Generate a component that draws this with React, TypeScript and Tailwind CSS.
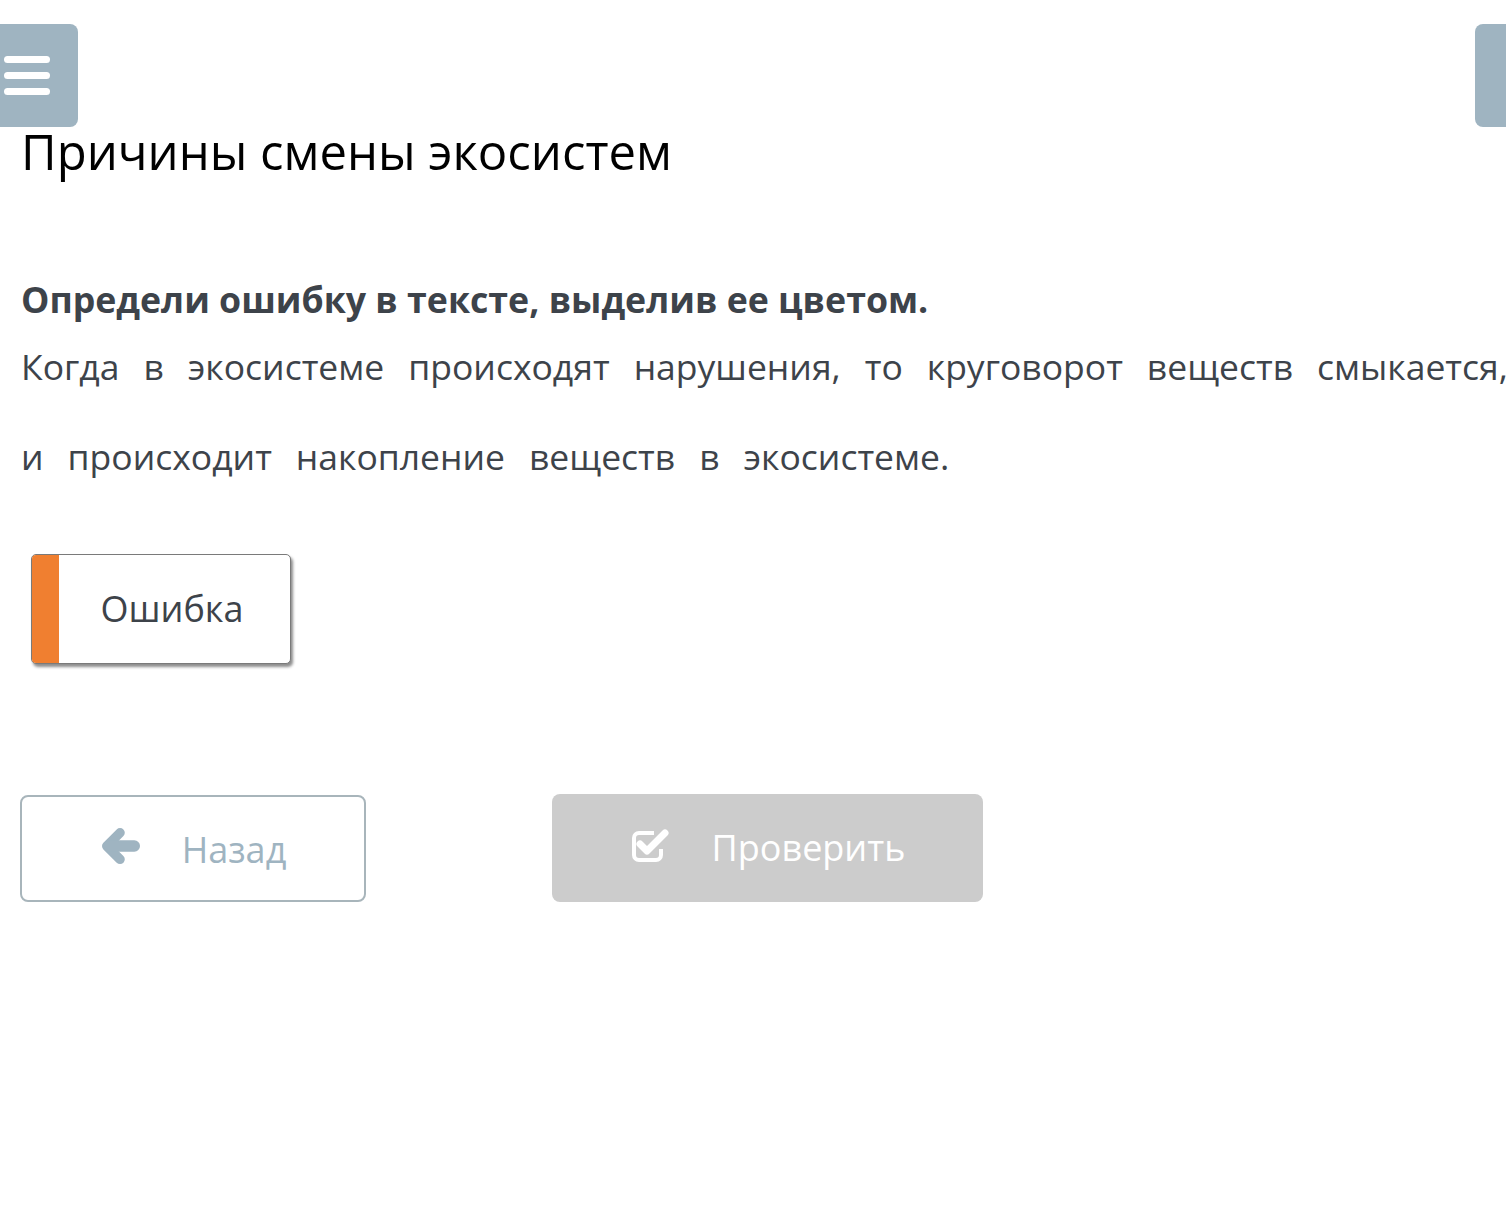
import React from "react";

const line1 = ["Когда", "в", "экосистеме", "происходят", "нарушения,", "то", "круговорот", "веществ", "смыкается,"];
const line2 = ["и", "происходит", "накопление", "веществ", "в", "экосистеме."];

export default function App() {
  return (
    <div className="relative w-[1506px] h-[1215px] overflow-hidden bg-white" style={{ fontFamily: '"Open Sans", sans-serif' }}>
      <div className="absolute left-0 top-[24px] w-[78px] h-[103px] bg-[#9fb4c1] rounded-r-[8px] flex flex-col justify-center gap-[9px] pl-[4px]">
        <div className="w-[46px] h-[7px] rounded-full bg-white" />
        <div className="w-[46px] h-[7px] rounded-full bg-white" />
        <div className="w-[46px] h-[7px] rounded-full bg-white" />
      </div>
      <div className="absolute left-[1475px] top-[24px] w-[60px] h-[103px] bg-[#9fb4c1] rounded-l-[8px]" />

      <div className="pl-[21px] pt-[121px]">
        <h1 className="text-[49px] leading-[60px] text-black font-normal">Причины смены экосистем</h1>
        <p className="mt-[94px] text-[35.7px] leading-[48px] font-bold text-[#3d434a]">Определи ошибку в тексте, выделив ее цветом.</p>
        <div className="mt-[14px] w-[1600px] text-[35.5px] text-[#3d434a]">
          <div className="flex gap-[24px] h-[60px] items-center whitespace-nowrap">
            {line1.map((w, i) => (
              <span key={i}>{w}</span>
            ))}
          </div>
          <div className="flex gap-[24px] h-[120px] items-center whitespace-nowrap">
            {line2.map((w, i) => (
              <span key={i}>{w}</span>
            ))}
          </div>
        </div>

        <div className="mt-[37px] ml-[10px] w-[260px] h-[110px] flex rounded-[5px] border border-[#7a7a7a] shadow-[2px_3px_3px_rgba(0,0,0,0.45)] overflow-hidden bg-white">
          <div className="w-[27px] h-full bg-[#f07f30]" />
          <div className="flex-1 flex items-center justify-center text-[36px] text-[#3d434a] pr-[5px]">Ошибка</div>
        </div>

        <div className="mt-[131px] flex items-start">
          <button className="w-[346px] h-[107px] -ml-[1px] border-2 border-[#a8b5bb] rounded-[8px] flex items-center justify-center gap-[42px] text-[36px] text-[#9fb4c1] bg-white">
            <svg width="38" height="40" viewBox="0 0 40 40" className="mt-[-4px] ml-[2px]">
              <path d="M19 5 L5 19 L19 33" fill="none" stroke="#9fb4c1" strokeWidth="10" strokeLinejoin="round" strokeLinecap="round" />
              <path d="M8 19 L34 19" fill="none" stroke="#9fb4c1" strokeWidth="12" strokeLinecap="round" />
            </svg>
            <span className="mt-[2px]">Назад</span>
          </button>
          <button className="ml-[186px] w-[431px] h-[108px] -mt-[1px] bg-[#cccccc] rounded-[8px] flex items-center justify-center gap-[42px] text-[36px] text-white">
            <svg width="40" height="36" viewBox="0 0 40 36" className="mt-[-6px]">
              <path d="M24 6 H9 a5 5 0 0 0 -5 5 V28 a5 5 0 0 0 5 5 H26 a5 5 0 0 0 5 -5 V22" fill="none" stroke="white" strokeWidth="4" />
              <path d="M10 17 L17 24 L35 6" fill="none" stroke="white" strokeWidth="7" strokeLinejoin="round" strokeLinecap="round" />
            </svg>
            <span>Проверить</span>
          </button>
        </div>
      </div>
    </div>
  );
}
